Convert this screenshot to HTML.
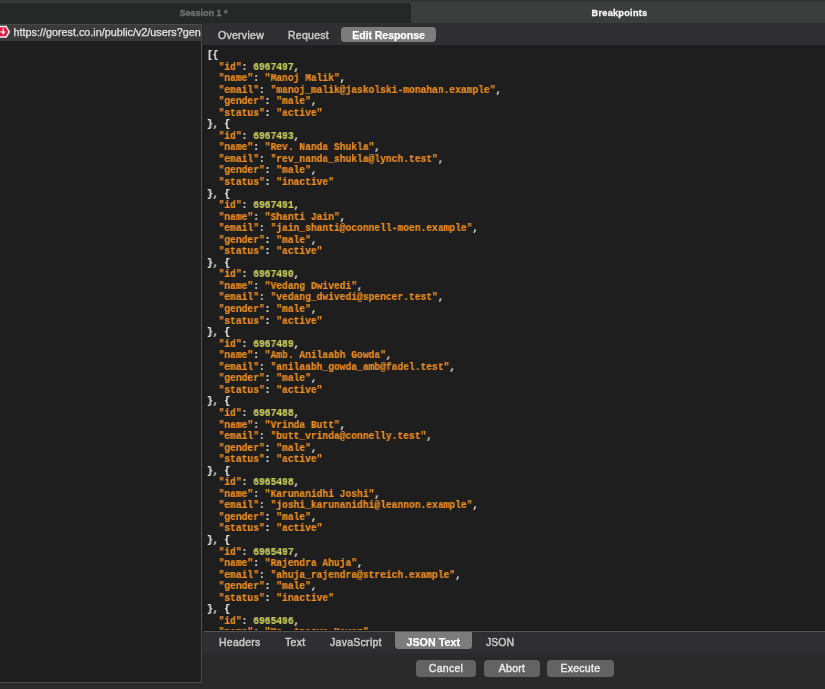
<!DOCTYPE html>
<html><head><meta charset="utf-8"><title>Breakpoints</title>
<style>
html,body{margin:0;padding:0;}
body{width:825px;height:689px;overflow:hidden;background:#2a2a2b;font-family:"Liberation Sans",sans-serif;position:relative;}
div{position:absolute;box-sizing:border-box;}
#tab1,#tab2,#row,.tb,.btn,pre{will-change:transform;}
#topstrip{left:0;top:0;width:825px;height:3px;background:#383737;}
#topstrip2{left:411px;top:0;width:414px;height:2px;background:#333333;}
#tab1{left:0;top:3px;width:411px;height:21px;background:#262827;color:#707070;font-weight:bold;font-size:9.2px;line-height:21.2px;text-align:center;padding-right:4px;letter-spacing:-0.1px;-webkit-text-stroke:0.35px;}
#tab2{left:411px;top:2px;width:414px;height:21.4px;background:#3c3e3d;color:#f6f6f6;font-weight:bold;font-size:9.2px;line-height:23.2px;text-align:center;padding-left:3px;letter-spacing:0.25px;-webkit-text-stroke:0.3px;}
#left{left:0;top:24px;width:202px;height:659px;background:#1e1e1e;border-right:1px solid #4c4c4c;border-bottom:1px solid #4c4c4c;border-top:1px solid #4a4a4a;}
#row{left:0;top:0;width:201px;height:16px;background:#3a3a3a;overflow:hidden;white-space:nowrap;color:#e6e6e6;font-size:10.8px;line-height:15.4px;padding-left:13.5px;-webkit-text-stroke:0.25px;}
#toolbar{left:203px;top:23.4px;width:622px;height:22px;background:#2f2f31;}
#gap{left:202px;top:24px;width:1.4px;height:660px;background:#272727;}
.tb{-webkit-text-stroke:0.45px;color:#cacaca;font-size:10.5px;letter-spacing:0.28px;line-height:15px;height:15px;white-space:nowrap;}
.pill{background:#7c7c7c;border-radius:4px;color:#ffffff;font-weight:bold;text-align:center;font-size:10.6px;letter-spacing:-0.08px;-webkit-text-stroke:0.25px;}
#editor{left:203px;top:45px;width:622px;height:586.2px;background:#1e1e1e;overflow:hidden;border-left:1.4px solid #181818;}
pre{margin:0;position:absolute;left:2.6px;top:5px;font-family:"Liberation Mono",monospace;font-weight:bold;font-size:10.56px;line-height:11.545px;color:#e0e0e0;transform:scaleX(0.9117);transform-origin:0 0;}
pre b{font-weight:bold;}
pre{-webkit-text-stroke:0.2px;}
.s{color:#ee8d24;}
.n{color:#c8cd5c;}
#edline0{left:204px;top:630px;width:621px;height:1px;background:#161616;}
#edline0{left:204px;top:630.3px;width:621px;height:0.8px;background:#161616;}
#edline{left:204px;top:631px;width:621px;height:2px;background:linear-gradient(#5c5c5c,#4a4a4a 50%,#333335);}
#btabs{left:203px;top:632.4px;width:622px;height:20.3px;background:#2f2f31;}
.btn{-webkit-text-stroke:0.4px;background:#636363;border-radius:4px;color:#ececec;font-size:10.5px;letter-spacing:0.28px;line-height:17px;height:16.6px;text-align:center;top:660px;}
</style></head><body>
<div id="topstrip"></div><div id="topstrip2"></div>
<div id="tab1">Session 1 *</div>
<div id="tab2">Breakpoints</div>
<div id="left"><div id="row">https://gorest.co.in/public/v2/users?gender=male</div>
<svg style="position:absolute;left:-4px;top:0.2px" width="15" height="14" viewBox="0 0 15 14"><path d="M0 1.6h10.2l3.1 5.2-3.1 5.2h-10.2z" fill="#e9173f" stroke="#f3eef0" stroke-width="1.5" stroke-linejoin="round"/><path d="M7.2 3.6v4.2" stroke="#fff" stroke-width="1.2" fill="none"/><path d="M5.3 7.3h3.8l-1.9 2.4z" fill="#fff"/><path d="M3 6.9h6.3" stroke="#fff" stroke-width="0.9" fill="none"/></svg>
</div>
<div id="gap"></div>
<div id="toolbar"></div>
<div class="tb" style="left:217.5px;top:28px;">Overview</div>
<div class="tb" style="left:287.6px;top:28px;">Request</div>
<div class="tb pill" style="left:341px;top:27px;width:95px;height:15px;line-height:16.4px;">Edit Response</div>
<div id="editor"><pre>[{
  <b class="s">&quot;id&quot;</b>: <b class="n">6967497</b>,
  <b class="s">&quot;name&quot;</b>: <b class="s">&quot;Manoj Malik&quot;</b>,
  <b class="s">&quot;email&quot;</b>: <b class="s">&quot;manoj_malik@jaskolski-monahan.example&quot;</b>,
  <b class="s">&quot;gender&quot;</b>: <b class="s">&quot;male&quot;</b>,
  <b class="s">&quot;status&quot;</b>: <b class="s">&quot;active&quot;</b>
}, {
  <b class="s">&quot;id&quot;</b>: <b class="n">6967493</b>,
  <b class="s">&quot;name&quot;</b>: <b class="s">&quot;Rev. Nanda Shukla&quot;</b>,
  <b class="s">&quot;email&quot;</b>: <b class="s">&quot;rev_nanda_shukla@lynch.test&quot;</b>,
  <b class="s">&quot;gender&quot;</b>: <b class="s">&quot;male&quot;</b>,
  <b class="s">&quot;status&quot;</b>: <b class="s">&quot;inactive&quot;</b>
}, {
  <b class="s">&quot;id&quot;</b>: <b class="n">6967491</b>,
  <b class="s">&quot;name&quot;</b>: <b class="s">&quot;Shanti Jain&quot;</b>,
  <b class="s">&quot;email&quot;</b>: <b class="s">&quot;jain_shanti@oconnell-moen.example&quot;</b>,
  <b class="s">&quot;gender&quot;</b>: <b class="s">&quot;male&quot;</b>,
  <b class="s">&quot;status&quot;</b>: <b class="s">&quot;active&quot;</b>
}, {
  <b class="s">&quot;id&quot;</b>: <b class="n">6967490</b>,
  <b class="s">&quot;name&quot;</b>: <b class="s">&quot;Vedang Dwivedi&quot;</b>,
  <b class="s">&quot;email&quot;</b>: <b class="s">&quot;vedang_dwivedi@spencer.test&quot;</b>,
  <b class="s">&quot;gender&quot;</b>: <b class="s">&quot;male&quot;</b>,
  <b class="s">&quot;status&quot;</b>: <b class="s">&quot;active&quot;</b>
}, {
  <b class="s">&quot;id&quot;</b>: <b class="n">6967489</b>,
  <b class="s">&quot;name&quot;</b>: <b class="s">&quot;Amb. Anilaabh Gowda&quot;</b>,
  <b class="s">&quot;email&quot;</b>: <b class="s">&quot;anilaabh_gowda_amb@fadel.test&quot;</b>,
  <b class="s">&quot;gender&quot;</b>: <b class="s">&quot;male&quot;</b>,
  <b class="s">&quot;status&quot;</b>: <b class="s">&quot;active&quot;</b>
}, {
  <b class="s">&quot;id&quot;</b>: <b class="n">6967488</b>,
  <b class="s">&quot;name&quot;</b>: <b class="s">&quot;Vrinda Butt&quot;</b>,
  <b class="s">&quot;email&quot;</b>: <b class="s">&quot;butt_vrinda@connelly.test&quot;</b>,
  <b class="s">&quot;gender&quot;</b>: <b class="s">&quot;male&quot;</b>,
  <b class="s">&quot;status&quot;</b>: <b class="s">&quot;active&quot;</b>
}, {
  <b class="s">&quot;id&quot;</b>: <b class="n">6965498</b>,
  <b class="s">&quot;name&quot;</b>: <b class="s">&quot;Karunanidhi Joshi&quot;</b>,
  <b class="s">&quot;email&quot;</b>: <b class="s">&quot;joshi_karunanidhi@leannon.example&quot;</b>,
  <b class="s">&quot;gender&quot;</b>: <b class="s">&quot;male&quot;</b>,
  <b class="s">&quot;status&quot;</b>: <b class="s">&quot;active&quot;</b>
}, {
  <b class="s">&quot;id&quot;</b>: <b class="n">6965497</b>,
  <b class="s">&quot;name&quot;</b>: <b class="s">&quot;Rajendra Ahuja&quot;</b>,
  <b class="s">&quot;email&quot;</b>: <b class="s">&quot;ahuja_rajendra@streich.example&quot;</b>,
  <b class="s">&quot;gender&quot;</b>: <b class="s">&quot;male&quot;</b>,
  <b class="s">&quot;status&quot;</b>: <b class="s">&quot;inactive&quot;</b>
}, {
  <b class="s">&quot;id&quot;</b>: <b class="n">6965496</b>,
  <b class="s">&quot;name&quot;</b>: <b class="s">&quot;Ms. Anasya Nayar&quot;</b>,</pre></div>
<div id="edline0"></div>
<div id="edline"></div>
<div id="btabs"></div>
<div class="tb" style="left:218.8px;top:635px;">Headers</div>
<div class="tb" style="left:284.6px;top:635px;">Text</div>
<div class="tb" style="left:329.6px;top:635px;">JavaScript</div>
<div class="tb pill" style="left:395px;top:632px;width:76.6px;height:17.4px;line-height:21px;border-radius:0 0 3.5px 3.5px;letter-spacing:0.1px;">JSON Text</div>
<div class="tb" style="left:485.8px;top:635px;letter-spacing:0;">JSON</div>
<div class="btn" style="left:416px;width:60px;">Cancel</div>
<div class="btn" style="left:484px;width:56px;">Abort</div>
<div class="btn" style="left:547.3px;width:66.7px;">Execute</div>
</body></html>
